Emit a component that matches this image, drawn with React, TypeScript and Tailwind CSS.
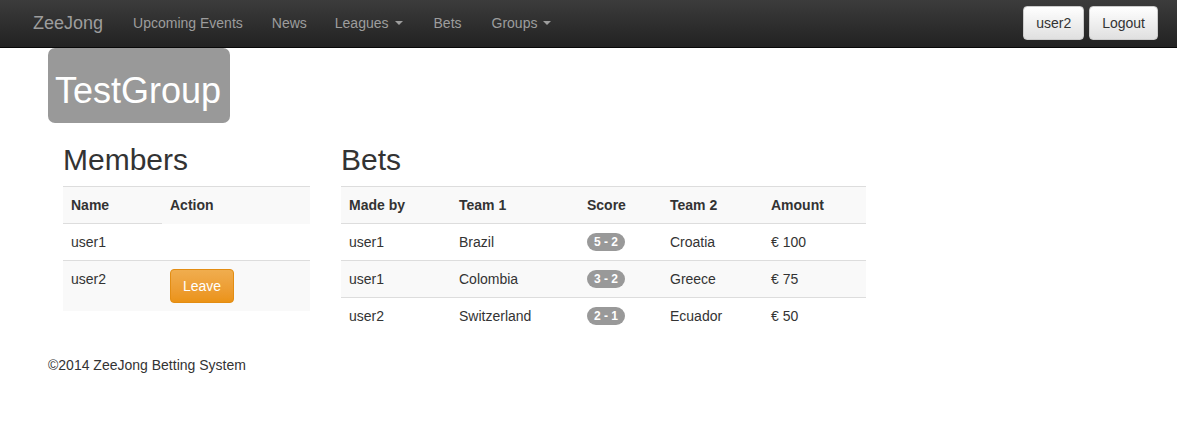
import React from "react";

const font = { fontFamily: '"Liberation Sans", Arial, Helvetica, sans-serif' };

function Caret() {
  return (
    <span className="ml-[6px] inline-block h-0 w-0 border-x-[4px] border-t-[4px] border-x-transparent border-t-[#9d9d9d] align-middle" />
  );
}

function Badge({ children }: { children: React.ReactNode }) {
  return (
    <span className="inline-block rounded-[10px] bg-[#999] px-[7px] py-[3px] text-[12px] font-bold leading-[12px] text-white align-[1px]">
      {children}
    </span>
  );
}

export default function App() {
  const bets = [
    { by: "user1", t1: "Brazil", score: "5 - 2", t2: "Croatia", amt: "€ 100" },
    { by: "user1", t1: "Colombia", score: "3 - 2", t2: "Greece", amt: "€ 75" },
    { by: "user2", t1: "Switzerland", score: "2 - 1", t2: "Ecuador", amt: "€ 50" },
  ];
  return (
    <div style={font} className="min-h-[434px] bg-white text-[14px] leading-[20px] text-[#333]">
      {/* Navbar */}
      <div className="flex h-[48px] items-center border-b border-b-[#080808] bg-gradient-to-b from-[#3c3c3c] to-[#222] pb-[2px] pl-[33px] pr-[19px]">
        <span className="text-[18px] leading-[20px] text-[#9d9d9d]">ZeeJong</span>
        <nav className="ml-[30px] flex items-center text-[14px] text-[#9d9d9d]">
          <span>Upcoming Events</span>
          <span className="ml-[29px]">News</span>
          <span className="ml-[28px] flex items-center">Leagues<Caret /></span>
          <span className="ml-[31px]">Bets</span>
          <span className="ml-[30px] flex items-center">Groups<Caret /></span>
        </nav>
        <div className="ml-auto flex gap-[5px]">
          <button className="h-[34px] rounded-[4px] border border-[#ccc] bg-gradient-to-b from-white to-[#e0e0e0] px-[12px] text-[14px] text-[#333]">
            user2
          </button>
          <button className="h-[34px] rounded-[4px] border border-[#ccc] bg-gradient-to-b from-white to-[#e0e0e0] px-[12px] text-[14px] text-[#333]">
            Logout
          </button>
        </div>
      </div>

      {/* Content */}
      <div className="pl-[48px]">
        <div className="inline-block rounded-[7px] bg-[#999] pb-[8px] pl-[7px] pr-[9px] pt-[19px] text-[36px] leading-[48px] text-white">
          <span>TestGroup</span>
        </div>

        <div className="mt-[20px] flex pl-[15px]">
          {/* Members */}
          <div className="w-[247px]">
            <h2 className="text-[30px] leading-[33px] font-normal">Members</h2>
            <table className="mt-[10px] w-full border-collapse border-t border-t-[#ddd] text-left">
              <tbody>
                <tr className="bg-[#f9f9f9]">
                  <th className="w-[99px] border-b border-b-[#ddd] p-[8px] font-bold">Name</th>
                  <th className="p-[8px] font-bold">Action</th>
                </tr>
                <tr>
                  <td className="border-b border-b-[#ddd] p-[8px]">user1</td>
                  <td className="border-b border-b-[#ddd] p-[8px]"></td>
                </tr>
                <tr className="bg-[#f9f9f9]">
                  <td className="p-[8px] align-top">user2</td>
                  <td className="p-[8px] align-top">
                    <button className="h-[34px] rounded-[4px] border border-[#e38d13] bg-gradient-to-b from-[#f0ad4e] to-[#eb9316] px-[12px] text-[14px] text-white">
                      Leave
                    </button>
                  </td>
                </tr>
              </tbody>
            </table>
          </div>

          {/* Bets */}
          <div className="ml-[31px] w-[525px]">
            <h2 className="text-[30px] leading-[33px] font-normal">Bets</h2>
            <table className="mt-[10px] w-full border-collapse border-t border-t-[#ddd] text-left">
              <thead>
                <tr className="bg-[#f9f9f9]">
                  <th className="w-[110px] border-b border-b-[#ddd] p-[8px] font-bold">Made by</th>
                  <th className="w-[128px] border-b border-b-[#ddd] p-[8px] font-bold">Team 1</th>
                  <th className="w-[83px] border-b border-b-[#ddd] p-[8px] font-bold">Score</th>
                  <th className="w-[101px] border-b border-b-[#ddd] p-[8px] font-bold">Team 2</th>
                  <th className="border-b border-b-[#ddd] p-[8px] font-bold">Amount</th>
                </tr>
              </thead>
              <tbody>
                {bets.map((b, i) => (
                  <tr key={i} className={i === 1 ? "bg-[#f9f9f9]" : ""}>
                    <td className={`p-[8px] ${i < 2 ? "border-b border-b-[#ddd]" : ""}`}>{b.by}</td>
                    <td className={`p-[8px] ${i < 2 ? "border-b border-b-[#ddd]" : ""}`}>{b.t1}</td>
                    <td className={`p-[8px] ${i < 2 ? "border-b border-b-[#ddd]" : ""}`}>
                      <Badge>{b.score}</Badge>
                    </td>
                    <td className={`p-[8px] ${i < 2 ? "border-b border-b-[#ddd]" : ""}`}>{b.t2}</td>
                    <td className={`p-[8px] ${i < 2 ? "border-b border-b-[#ddd]" : ""}`}>{b.amt}</td>
                  </tr>
                ))}
              </tbody>
            </table>
          </div>
        </div>

        <div className="mt-[21px]">©2014 ZeeJong Betting System</div>
      </div>
    </div>
  );
}
